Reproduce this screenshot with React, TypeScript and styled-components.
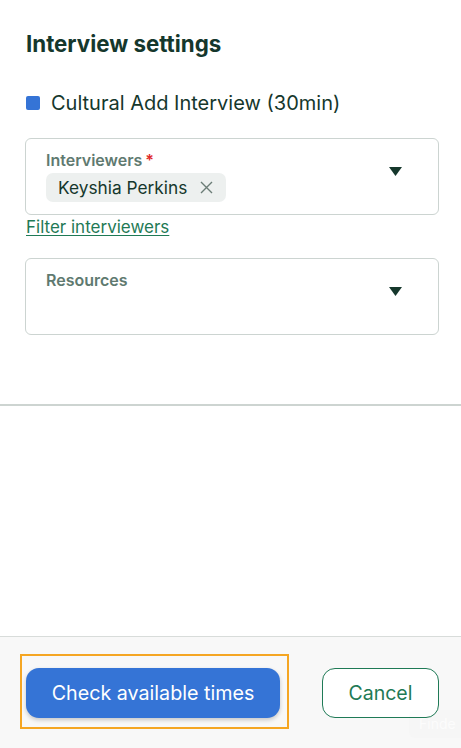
import React from "react";
import styled, { createGlobalStyle } from "styled-components";

const Global = createGlobalStyle`
  html, body { margin: 0; padding: 0; background: #ffffff; }
  body { font-family: Inter, "Noto Sans", sans-serif; -webkit-font-smoothing: antialiased; }
  * { box-sizing: border-box; }
`;

const Page = styled.div`
  width: 461px;
  height: 748px;
  display: flex;
  flex-direction: column;
  background: #ffffff;
  overflow: hidden;
`;

const Body = styled.div`
  padding: 29px 22px 0 25px;
  display: flex;
  flex-direction: column;
  height: 406px;
  border-bottom: 2px solid #cdd4d1;
`;

const Title = styled.h2`
  margin: 0 0 0 1px;
  font-size: 22.3px;
  font-weight: 700;
  color: #15372c;
  line-height: 30px;
`;

const TypeRow = styled.div`
  display: flex;
  align-items: center;
  gap: 11px;
  margin: 32px 0 0 1px;
`;

const Swatch = styled.span`
  width: 14px;
  height: 14px;
  border-radius: 2px;
  background: #3574d6;
`;

const TypeName = styled.span`
  font-size: 20px;
  color: #15372c;
  line-height: 24px;
`;

const SelectBox = styled.div<{ $mt: number }>`
  margin-top: ${(p) => p.$mt}px;
  height: 77px;
  border: 1px solid #ccd4d1;
  border-radius: 6px;
  display: flex;
  align-items: flex-start;
  padding: 11px 36px 0 20px;
`;

const SelectInner = styled.div`
  flex: 1;
  display: flex;
  flex-direction: column;
  gap: 3px;
`;

const Label = styled.div`
  font-size: 16px;
  font-weight: 600;
  color: #5f7a70;
  line-height: 20px;
`;

const Star = styled.span`
  color: #e02a2a;
  margin-left: 3px;
`;

const Chip = styled.span`
  align-self: flex-start;
  display: inline-flex;
  align-items: center;
  gap: 13px;
  height: 29px;
  padding: 0 13px 0 12px;
  background: #edf0ef;
  border-radius: 7px;
  font-size: 17.3px;
  color: #15372c;
`;

const Caret = styled.svg`
  margin-top: 17px;
  flex: none;
`;

const FilterLink = styled.a`
  margin: 1px 0 0 1px;
  align-self: flex-start;
  font-size: 17px;
  line-height: 22px;
  color: #1f7a56;
  text-decoration: underline;
  text-decoration-thickness: 1px;
  text-underline-offset: 2px;
`;

const Spacer = styled.div`
  flex: 1;
`;

const Footer = styled.div`
  margin-top: 230px;
  flex: 1;
  border-top: 1px solid #d8dcda;
  background: #f8f8f8;
  display: flex;
  align-items: flex-start;
  justify-content: space-between;
  padding: 17px 22px 0 20px;
  position: relative;
`;

const Highlight = styled.div`
  border: 2px solid #f5a623;
  padding: 12px 7px 9px 4px;
`;

const PrimaryButton = styled.button`
  width: 254px;
  height: 50px;
  border: none;
  border-radius: 13px;
  background: #3574d6;
  color: #ffffff;
  font-family: inherit;
  font-size: 19.7px;
  box-shadow: 0 2px 4px rgba(0, 0, 0, 0.2);
`;

const SecondaryButton = styled.button`
  margin-top: 14px;
  width: 117px;
  height: 50px;
  border: 1px solid #1f7a56;
  border-radius: 13px;
  background: #ffffff;
  color: #1f7a56;
  font-family: inherit;
  font-size: 19.5px;
`;

const GhostTip = styled.div`
  position: absolute;
  right: -8px;
  top: 73px;
  width: 60px;
  height: 28px;
  border-radius: 5px;
  background: rgba(0, 0, 0, 0.008);
  color: rgba(255, 255, 255, 0.7);
  font-size: 14px;
  padding: 5px 10px;
`;

const CaretIcon = () => (
  <Caret width="13" height="9" viewBox="0 0 13 9">
    <path d="M0 0 H13 L6.5 9 Z" fill="#15372c" />
  </Caret>
);

export default function App() {
  return (
    <Page>
      <Global />
      <Body>
        <Title>Interview settings</Title>
        <TypeRow>
          <Swatch />
          <TypeName>Cultural Add Interview (30min)</TypeName>
        </TypeRow>
        <SelectBox $mt={23}>
          <SelectInner>
            <Label>
              Interviewers<Star>*</Star>
            </Label>
            <Chip>
              Keyshia Perkins
              <svg width="13" height="13" viewBox="0 0 13 13">
                <path d="M1 1 L12 12 M12 1 L1 12" stroke="#6b7c76" strokeWidth="1.4" />
              </svg>
            </Chip>
          </SelectInner>
          <CaretIcon />
        </SelectBox>
        <FilterLink href="#">Filter interviewers</FilterLink>
        <SelectBox $mt={20}>
          <SelectInner>
            <Label>Resources</Label>
          </SelectInner>
          <CaretIcon />
        </SelectBox>
        <Spacer />
      </Body>
      <Footer>
        <Highlight>
          <PrimaryButton>Check available times</PrimaryButton>
        </Highlight>
        <SecondaryButton>Cancel</SecondaryButton>
        <GhostTip>Finde</GhostTip>
      </Footer>
    </Page>
  );
}
